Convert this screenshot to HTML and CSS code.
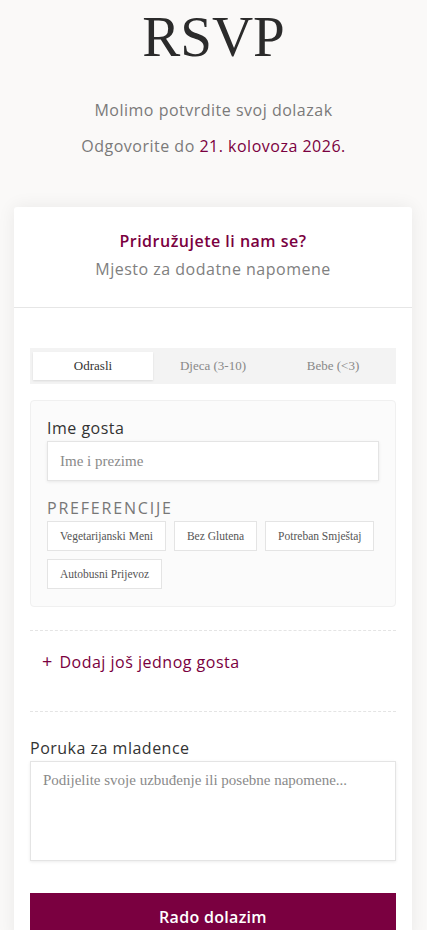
FILE: index.html
```html
<!DOCTYPE html>
<html lang="hr">
<head>
    <meta charset="UTF-8">
    <meta name="viewport" content="width=device-width, initial-scale=1.0">
    <title>RSVP</title>
    <link rel="stylesheet" href="styles.css">
</head>
<body>
    <div class="intro">
        <h1>RSVP</h1>
        <p class="intro-text">Molimo potvrdite svoj dolazak</p>
        <p class="intro-text">Odgovorite do <span class="accent">21. kolovoza 2026.</span></p>
    </div>

    <div class="card">
        <div class="card-head">
            <h2>Pridružujete li nam se?</h2>
            <p>Mjesto za dodatne napomene</p>
        </div>

        <div class="card-body">
            <div class="tabs">
                <button class="tab active">Odrasli</button>
                <button class="tab">Djeca (3-10)</button>
                <button class="tab">Bebe (&lt;3)</button>
            </div>

            <div class="guest">
                <label class="field-label">Ime gosta</label>
                <input type="text" class="text-input" placeholder="Ime i prezime">

                <div class="prefs-title">PREFERENCIJE</div>
                <div class="chips">
                    <span class="chip">Vegetarijanski Meni</span>
                    <span class="chip">Bez Glutena</span>
                    <span class="chip">Potreban Smještaj</span>
                    <span class="chip">Autobusni Prijevoz</span>
                </div>
            </div>

            <div class="add-guest">
                <span class="plus">+</span> Dodaj još jednog gosta
            </div>

            <label class="field-label msg-label">Poruka za mladence</label>
            <textarea class="text-area" placeholder="Podijelite svoje uzbuđenje ili posebne napomene..."></textarea>

            <button class="submit-btn">Rado dolazim</button>
        </div>
    </div>
</body>
</html>
```

FILE: styles.css
```css
/* Page */
body {
    margin: 0;
    padding: 0;
    background: #faf9f8;
    font-family: "Open Sans", Arial, sans-serif;
    letter-spacing: 0.5px;
    color: #333;
}

/* Intro */
.intro {
    text-align: center;
    padding-top: 2px;
}

.intro h1 {
    margin: 0;
    font-family: "Liberation Serif", "Times New Roman", serif;
    font-weight: normal;
    font-size: 57px;
    line-height: 70px;
    letter-spacing: 0;
    color: #2b2b2b;
}

.intro-text {
    margin: 0;
    font-size: 16px;
    line-height: 36px;
    color: #7a7a7a;
}

.intro-text:first-of-type {
    margin-top: 20px;
}

.accent {
    color: #7a0040;
}

/* Card */
.card {
    margin: 43px 15px 0 14px;
    background: white;
    box-shadow: 0 0 18px rgba(0,0,0,0.07);
    border-radius: 3px;
}

.card-head {
    text-align: center;
    padding: 22px 20px 26px;
    border-bottom: 1px solid #e6e6e6;
}

.card-head h2 {
    margin: 0;
    font-size: 16px;
    font-weight: 600;
    line-height: 24px;
    color: #7a0040;
}

.card-head p {
    margin: 4px 0 0;
    font-size: 16px;
    line-height: 24px;
    color: #808080;
}

.card-body {
    padding: 40px 16px 0;
}

/* Tabs */
.tabs {
    display: flex;
    background: #f3f3f3;
    padding: 4px 3px;
}

.tab {
    flex: 1;
    border: none;
    background: none;
    height: 28px;
    font-family: "Liberation Serif", serif;
    font-size: 13px;
    color: #888;
    cursor: pointer;
}

.tab.active {
    background: white;
    color: #333;
    box-shadow: 0 1px 2px rgba(0,0,0,0.1);
}

/* Guest block */
.guest {
    margin-top: 16px;
    background: #fbfbfb;
    border: 1px solid #f0f0f0;
    border-radius: 4px;
    padding: 16px 16px 17px;
}

.field-label {
    display: block;
    font-size: 16px;
    line-height: 22px;
    color: #333;
}

.text-input {
    display: block;
    box-sizing: border-box;
    width: 100%;
    height: 40px;
    margin-top: 2px;
    padding: 0 12px;
    border: 1px solid #e4e4e4;
    background: white;
    box-shadow: 0 1px 3px rgba(0,0,0,0.08);
    font-family: "Liberation Serif", serif;
    font-size: 15px;
}

.text-input::placeholder,
.text-area::placeholder {
    color: #8a8a8a;
}

.prefs-title {
    margin-top: 17px;
    font-size: 16px;
    line-height: 20px;
    letter-spacing: 1.8px;
    color: #777;
}

.chips {
    display: flex;
    flex-wrap: wrap;
    gap: 8px;
    margin-top: 3px;
}

.chip {
    border: 1px solid #e4e4e4;
    background: white;
    padding: 0 12px;
    height: 28px;
    line-height: 28px;
    font-family: "Liberation Serif", serif;
    font-size: 11.5px;
    letter-spacing: 0;
    color: #555;
}

/* Add guest */
.add-guest {
    margin-top: 23px;
    border-top: 1px dashed #e4e4e4;
    border-bottom: 1px dashed #e4e4e4;
    padding: 18px 12px 38px;
    font-size: 16px;
    color: #7a0040;
}

.plus {
    font-size: 18px;
    margin-right: 2px;
}

.msg-label {
    margin-top: 25px;
}

.text-area {
    display: block;
    box-sizing: border-box;
    width: 100%;
    height: 100px;
    margin-top: 2px;
    padding: 10px 12px;
    border: 1px solid #e4e4e4;
    box-shadow: 0 1px 3px rgba(0,0,0,0.08);
    resize: none;
    font-family: "Liberation Serif", serif;
    font-size: 15px;
}

.submit-btn {
    display: block;
    width: 100%;
    height: 48px;
    margin-top: 32px;
    border: none;
    background: #7a0040;
    color: white;
    font-family: "Open Sans", sans-serif;
    font-size: 16px;
    font-weight: 600;
    letter-spacing: 0.3px;
    cursor: pointer;
}
```
